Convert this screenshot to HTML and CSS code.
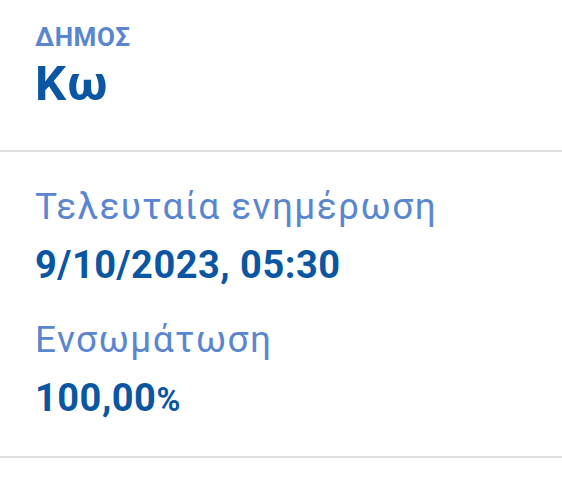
FILE: index.html
```html
<!DOCTYPE html>
<html lang="el">
<head>
  <meta charset="UTF-8">
  <meta name="viewport" content="width=device-width, initial-scale=1.0">
  <title>Δήμος Κω</title>
  <link rel="stylesheet" href="styles.css">
</head>
<body>
  <div class="section header">
    <div class="caption">ΔΗΜΟΣ</div>
    <h1 class="title">Κω</h1>
  </div>

  <div class="section details">
    <div class="item">
      <div class="label">Τελευταία ενημέρωση</div>
      <div class="value">9/10/2023, 05:30</div>
    </div>
    <div class="item">
      <div class="label">Ενσωμάτωση</div>
      <div class="value">100,00<span class="unit">%</span></div>
    </div>
  </div>
</body>
</html>
```

FILE: styles.css
```css
body {
  margin: 0;
  font-family: Roboto, "Noto Sans", sans-serif;
  background-color: #ffffff;
  color: #0b56a2;
}

.section {
  padding: 0 35px;
  border-bottom: 2px solid #dfe1e5;
}

.header {
  padding-top: 24px;
  padding-bottom: 38px;
}

.caption {
  font-size: 26px;
  line-height: 27px;
  font-weight: 700;
  letter-spacing: 0.6px;
  color: #5a86d0;
}

.title {
  margin: 5px 0 0;
  font-size: 49px;
  line-height: 56px;
  font-weight: 700;
  letter-spacing: 1px;
  color: #0b56a2;
}

.details {
  padding-top: 34px;
  padding-bottom: 35px;
  display: flex;
  flex-direction: column;
  gap: 33px;
}

.item {
  display: flex;
  flex-direction: column;
  gap: 17px;
}

.label {
  font-size: 37px;
  line-height: 41px;
  letter-spacing: 1.4px;
  color: #5a86d0;
}

.value {
  font-size: 38px;
  line-height: 42px;
  font-weight: 700;
  letter-spacing: 0.5px;
  color: #0b56a2;
}

.unit {
  font-size: 0.85em;
}
```
